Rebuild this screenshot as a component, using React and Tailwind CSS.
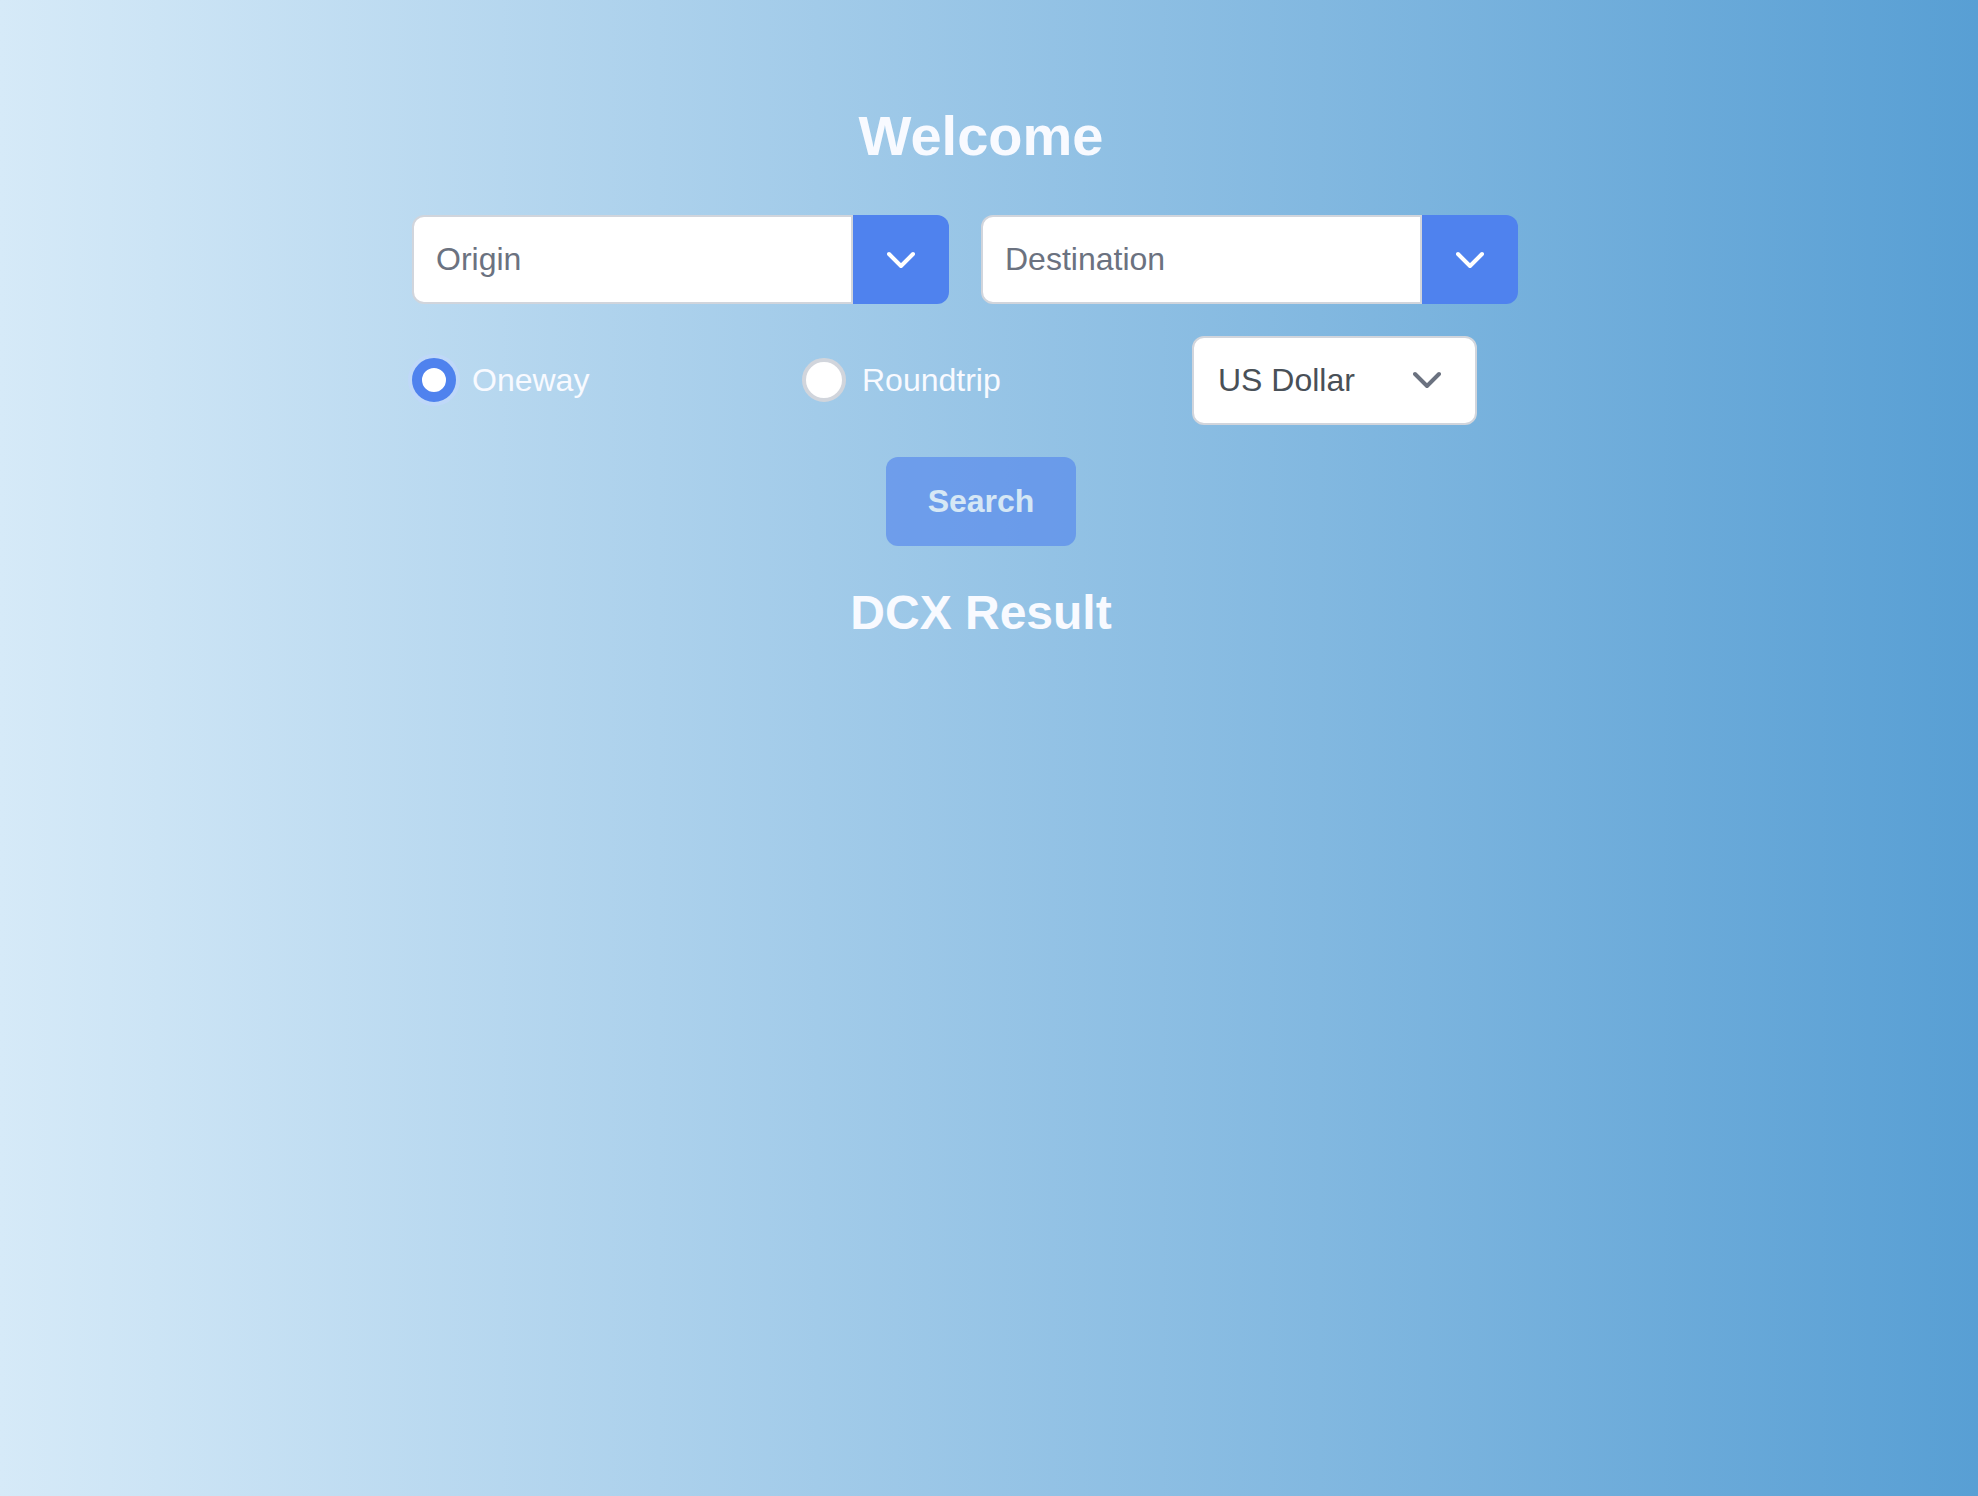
import { useState } from "react";

function Chevron({ className }) {
  return (
    <svg viewBox="0 0 28 28" fill="none" stroke="currentColor" strokeWidth="4" strokeLinecap="round" className={className} aria-hidden="true">
      <path d="M2 8 L14 20 L26 8" strokeLinejoin="round" />
    </svg>
  );
}

function PlaceField({ label }) {
  return (
    <div className="flex h-[89px] w-[537px]">
      <input
        type="text"
        aria-label={label}
        placeholder={label}
        className="min-w-0 flex-1 rounded-l-xl border-2 border-gray-300 bg-white px-[22px] pb-0.5 text-[32px] text-gray-600 outline-none placeholder:text-[#6b7280]"
      />
      <button type="button" aria-label={`Show ${label} options`} className="flex w-24 items-center justify-center rounded-r-xl bg-[#4f82ee] text-white">
        <Chevron className="size-7" />
      </button>
    </div>
  );
}

function TripOption({ label, checked, onChange }) {
  return (
    <label className="flex w-[358px] items-center gap-4 pb-0.5 text-[#f8faff]">
      <input
        type="radio"
        name="trip"
        checked={checked}
        onChange={onChange}
        className="size-11 appearance-none rounded-full border-4 border-gray-300 bg-white checked:border-[10px] checked:border-[#4f82ee] checked:shadow-[0_0_0_4px_#bfd8f8]"
      />
      {label}
    </label>
  );
}

export default function App() {
  const [trip, setTrip] = useState("oneway");
  return (
    <main className="min-h-screen bg-linear-to-r/srgb from-[#d6eaf8] to-[#589fd4] pt-[100px] pr-4 font-['Liberation_Sans',Arial,sans-serif] text-[32px] leading-9">
      <div className="mx-auto flex max-w-[1170px] flex-col items-center gap-8 px-4">
        <h1 className="mb-[11px] text-[56px] leading-[72px] font-bold text-[#f8faff]">Welcome</h1>
        <div className="flex w-full flex-wrap gap-8">
          <PlaceField label="Origin" />
          <PlaceField label="Destination" />
        </div>
        <div className="flex w-full flex-wrap items-center gap-8">
          <TripOption label="Oneway" checked={trip === "oneway"} onChange={() => setTrip("oneway")} />
          <TripOption label="Roundtrip" checked={trip === "roundtrip"} onChange={() => setTrip("roundtrip")} />
          <div className="relative">
            <select aria-label="Currency" className="h-[89px] w-[285px] appearance-none rounded-xl border-2 border-gray-300 bg-white px-6 pb-0.5 text-[#495057]">
              <option>US Dollar</option>
              <option>Euro</option>
            </select>
            <Chevron className="pointer-events-none absolute top-[30px] right-9 size-7 text-[#6b7280]" />
          </div>
        </div>
        <button type="button" disabled className="h-[89px] w-[190px] rounded-xl bg-[#4f82ee] pb-0.5 font-bold text-white opacity-60">
          Search
        </button>
        <h2 className="mt-[7px] text-[48px] leading-[56px] font-bold text-[#f8faff]">DCX Result</h2>
      </div>
    </main>
  );
}
